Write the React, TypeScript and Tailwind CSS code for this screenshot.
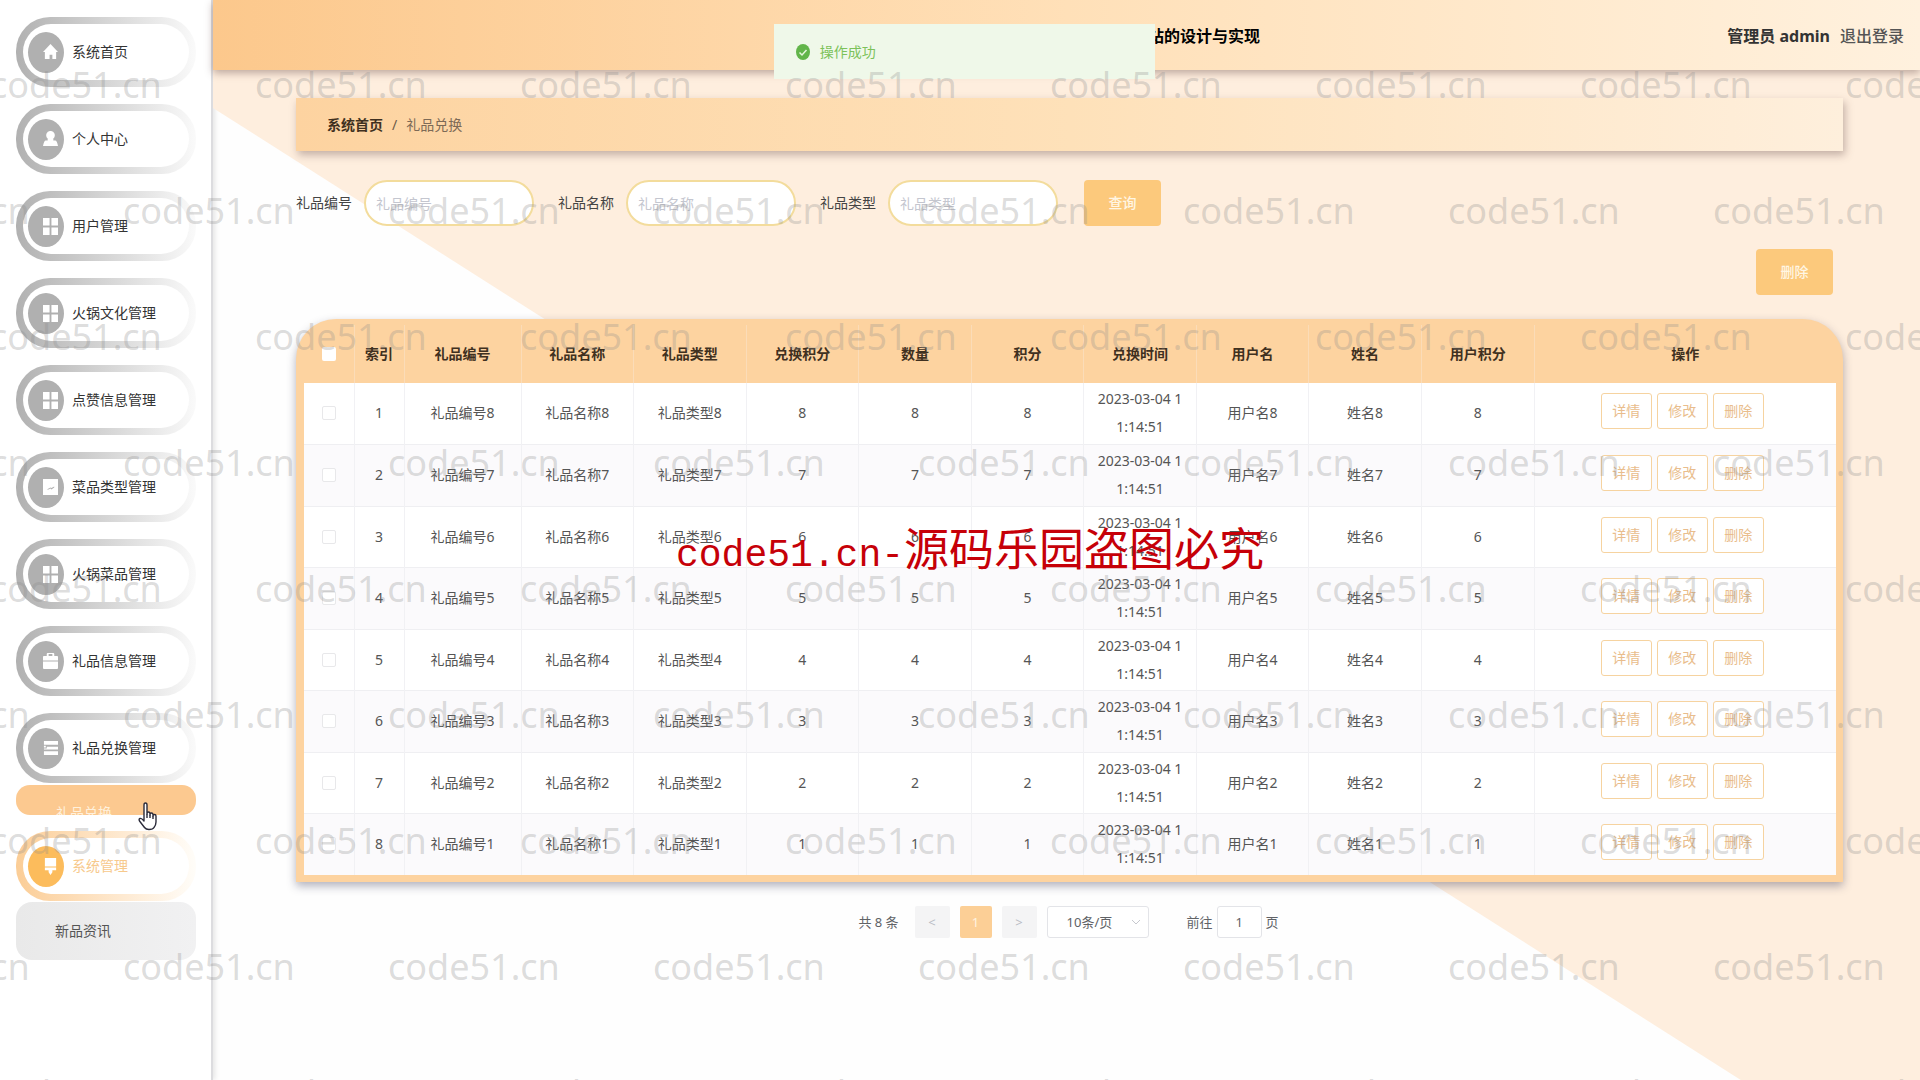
import { ReactNode } from "react";

type IconName = "home" | "user" | "grid" | "image" | "bag" | "list" | "brush";

const icons: Record<IconName, ReactNode> = {
  home: <path d="M8 0 16 8.500h-2V16h-4v-4.500H7V16H2V8.500H0Z" />,
  user: <path d="M8 0a4 4.500 0 0 1 3 8v2h2q2 0 3 6H0q1-6 3-6h2V8A4 4.500 0 0 1 8 0Z" />,
  grid: <path d="M0 0h7v8H0ZM9 0h7v8H9ZM0 10h7v8H0ZM9 10h7v8H9Z" />,
  image: <path fillRule="evenodd" d="M0 0h16v17H0Zm4 11h2l2-1 1 1 3-2V8L9 9.500 8 9Z" />,
  bag: (
    <path
      fillRule="evenodd"
      d="M4 3V1q0-1 1-1h6q1 0 1 1v2h3q1 0 1 1v4H0V4q0-1 1-1ZM6 3h4V1H6ZM0 9h16v7q0 1-1 1H1q-1 0-1-1Z"
    />
  ),
  list: <path d="M1 1h15v4H1Zm0 5h2v2H1Zm3 1h12v3H1V9h3Zm-3 5h15v4H1Z" />,
  brush: <path d="M2 0h12v9H2Zm0 10h12v3h-4v2l-2 3-2-3v-2H2Z" />,
};

const menu: { label: string; icon: IconName }[] = [
  { label: "系统首页", icon: "home" },
  { label: "个人中心", icon: "user" },
  { label: "用户管理", icon: "grid" },
  { label: "火锅文化管理", icon: "grid" },
  { label: "点赞信息管理", icon: "grid" },
  { label: "菜品类型管理", icon: "image" },
  { label: "火锅菜品管理", icon: "grid" },
  { label: "礼品信息管理", icon: "bag" },
  { label: "礼品兑换管理", icon: "list" },
];

const filters = ["礼品编号", "礼品名称", "礼品类型"];

const columns = [
  "礼品名称",
  "礼品类型",
  "兑换积分",
  "数量",
  "积分",
  "兑换时间",
  "用户名",
  "姓名",
  "用户积分",
];

const rows = [8, 7, 6, 5, 4, 3, 2, 1];
const actions = ["详情", "修改", "删除"];

function MenuItem({
  label,
  icon,
  active = false,
}: {
  label: string;
  icon: IconName;
  active?: boolean;
}) {
  return (
    <a
      href="#"
      className={`block rounded-[34px] bg-linear-to-r p-[7px] ${
        active ? "from-[#fbcd96] to-[#fffdf9]" : "from-[#b1b1b1] to-[#fafafa]"
      }`}
    >
      <span className="flex h-14 items-center gap-2 rounded-[28px] bg-white pl-[5px]">
        <span
          className={`flex h-[41px] w-9 items-center justify-end rounded-[50%] pr-1.5 ${
            active ? "bg-[#fcbc5c]" : "bg-[#b0b0b0]"
          }`}
        >
          <svg width="15" height="17" viewBox="0 0 16 18" fill="#fff">
            {icons[icon]}
          </svg>
        </span>
        <span className={active ? "text-[#f7c98c]" : "text-[#333]"}>{label}</span>
      </span>
    </a>
  );
}

function Sidebar() {
  return (
    <nav className="relative w-[213px] shrink-0 border-r-2 border-[#dcdcdf] bg-white pt-[17px] pr-[15px] pl-4 shadow-[2px_0_5px_rgba(0,0,0,0.1)]">
      <div className="flex flex-col gap-[17px]">
        {menu.map((item) => (
          <MenuItem key={item.label} {...item} />
        ))}
      </div>
      <a
        href="#"
        className="mt-0.5 block h-[30px] overflow-hidden rounded-[14px] bg-[#fcc990] pt-4 pl-10 leading-6 text-[#fff1dc]"
      >
        礼品兑换
      </a>
      <div className="mt-4">
        <MenuItem label="系统管理" icon="brush" active />
      </div>
      <a
        href="#"
        className="mt-px block h-[58px] rounded-[16px] bg-linear-to-r from-[#e9e9e9] to-[#f1f1f2] pl-[39px] leading-[58px] text-[#555]"
      >
        新品资讯
      </a>
      <svg
        className="absolute top-[802px] left-[138px]"
        width="20"
        height="30"
        viewBox="0 0 20 30"
        fill="#fff"
        stroke="#2b2b3a"
        strokeWidth="1.400"
        strokeLinejoin="round"
      >
        <path d="M6 18V3q0-2 1.500-2T9 3v9q0-2 1.500-2t1.500 2v1q0-2 1.500-2t1.500 2v1q0-1.500 1.500-1.500T18 14v6q0 3-2 5.500-1 2-5 2-3 0-4.500-2L1.500 19q-1-2 .5-2.500T6 19Z" />
        <path d="M9 12v4M12 13v3M15 14v3" />
      </svg>
    </nav>
  );
}

function Header() {
  return (
    <header className="flex h-[70px] items-center bg-linear-to-r from-[#fcc88c] via-[#ffe0b8] to-[#fff1de] pt-0.5 pr-4 shadow-[0_3px_8px_rgba(90,60,60,0.4)]">
      <h1 className="ml-[55.3%] text-base font-bold text-black">站的设计与实现</h1>
      <div className="ml-auto flex items-center gap-2.5 text-base text-[#333]">
        <span className="font-bold">管理员 admin</span>
        <a href="#" className="font-medium text-[#555]">
          退出登录
        </a>
      </div>
    </header>
  );
}

function GiftTable() {
  return (
    <div className="mt-6 rounded-t-[40px] bg-[#fdd3a0] pt-1.5 pr-[7px] pb-[7px] pl-2 shadow-[0_4px_10px_rgba(60,60,90,0.4)]">
      <table className="w-full table-fixed border-collapse text-center leading-[28px] text-[#555]">
        <thead>
          <tr className="h-[58px] text-[#3f3020]">
            <th className="w-[50px] border-r border-[#fbdcb8]">
              <input
                type="checkbox"
                aria-label="全选"
                className="mx-auto block size-3.5 appearance-none rounded-xs bg-white"
              />
            </th>
            <th className="w-[50px] border-r border-[#fbdcb8]">索引</th>
            <th className="w-[117px] border-r border-[#fbdcb8]">礼品编号</th>
            {columns.map((name) => (
              <th key={name} className="border-r border-[#fbdcb8]">
                {name}
              </th>
            ))}
            <th className="w-[302px]">操作</th>
          </tr>
        </thead>
        <tbody>
          {rows.map((n, i) => (
            <tr
              key={n}
              className="h-[61px] border-b border-[#efeff2] bg-white last:border-b-0 even:h-[62px] even:bg-[#fbfafc] [&>td]:border-r [&>td]:border-[#f1f1f4] [&>td]:p-0 [&>td:last-child]:border-r-0"
            >
              <td>
                <input
                  type="checkbox"
                  aria-label={`选择第${i + 1}行`}
                  className="mx-auto block size-3.5 appearance-none rounded-xs border border-[#e8e8ea] bg-white"
                />
              </td>
              <td>{i + 1}</td>
              <td>礼品编号{n}</td>
              <td>礼品名称{n}</td>
              <td>礼品类型{n}</td>
              <td>{n}</td>
              <td>{n}</td>
              <td>{n}</td>
              <td>
                2023-03-04 1<br />
                1:14:51
              </td>
              <td>用户名{n}</td>
              <td>姓名{n}</td>
              <td>{n}</td>
              <td>
                <div className="flex justify-center gap-[5px] pr-1.5 pb-1">
                  {actions.map((label) => (
                    <button
                      key={label}
                      className="h-9 w-[51px] rounded-[3px] border border-[#f6d3a0] bg-white text-[#e9bd8c]"
                    >
                      {label}
                    </button>
                  ))}
                </div>
              </td>
            </tr>
          ))}
        </tbody>
      </table>
    </div>
  );
}

function Pagination() {
  return (
    <div className="mt-6 flex h-8 items-center justify-center pr-0.5 text-[13px] text-[#606266]">
      <span>共 8 条</span>
      <button className="ml-4 h-8 w-[35px] rounded-xs bg-[#f4f4f5] text-[#b9bcc4]">&lt;</button>
      <button className="ml-2.5 h-8 w-8 rounded-xs bg-[#fccf96] text-[#fff4e0]">1</button>
      <button className="ml-2.5 h-8 w-[35px] rounded-xs bg-[#f4f4f5] text-[#b9bcc4]">&gt;</button>
      <div className="relative ml-2.5">
        <select
          aria-label="每页条数"
          className="h-8 w-[102px] appearance-none rounded-[3px] border border-[#e3e4e8] bg-white pl-[19px]"
        >
          <option>10条/页</option>
        </select>
        <svg
          className="pointer-events-none absolute top-3 right-2"
          width="10"
          height="9"
          viewBox="0 0 10 9"
          fill="none"
          stroke="#c6c8ce"
        >
          <path d="M1 2l4 4 4-4" />
        </svg>
      </div>
      <label className="ml-[38px] flex items-center gap-1">
        前往
        <input
          defaultValue="1"
          className="h-8 w-[45px] rounded-[3px] border border-[#e3e4e8] bg-white text-center"
        />
        页
      </label>
    </div>
  );
}

function Watermark() {
  return (
    <div
      aria-hidden="true"
      className="pointer-events-none absolute inset-0 overflow-hidden text-[36px] leading-[126px] text-[#8c8c8c]/30"
    >
      <div className="mt-[22px]">
        {Array.from({ length: 9 }, (_, row) => (
          <div key={row} className={`flex h-[126px] ${row % 2 ? "-ml-[142px]" : "-ml-[10px]"}`}>
            {Array.from({ length: 9 }, (_, col) => (
              <span key={col} className="w-[265px] shrink-0">
                code51.cn
              </span>
            ))}
          </div>
        ))}
      </div>
    </div>
  );
}

export default function App() {
  return (
    <div className="relative flex min-h-screen overflow-hidden bg-[#fefefe] font-['Noto_Sans','Noto_Sans_CJK_SC',sans-serif] text-sm">
      <Sidebar />
      <div className="relative min-w-0 flex-1">
        <div className="absolute inset-0 bg-[#feeede] [clip-path:polygon(0_0,100%_0,100%_100%,89.5%_100%,0_10%)]" />
        <div className="relative">
          <Header />
          <main className="pt-7 pr-[77px] pl-[83px]">
            <div className="flex h-[53px] items-center gap-[9px] bg-linear-to-r from-[#fdd3a0] via-[#fee1b9] to-[#feefdc] px-[31px] shadow-[2px_4px_8px_rgba(90,60,60,0.35)]">
              <a href="#" className="font-bold text-[#3f3020]">
                系统首页
              </a>
              <span className="text-[#6b5a48]">/</span>
              <span className="text-[#7d6a56]">礼品兑换</span>
            </div>

            <form className="mt-[29px] flex items-center gap-6">
              {filters.map((name) => (
                <label key={name} className="flex items-center gap-3 text-[#444]">
                  {name}
                  <input
                    placeholder={name}
                    className="h-[46px] w-[170px] rounded-full border-2 border-[#f3dc9c] bg-white px-2.5 placeholder:text-[#c4c6cf]"
                  />
                </label>
              ))}
              <button
                type="button"
                className="ml-0.5 h-[46px] w-[77px] rounded-[4px] bg-[#fcc97c] font-medium text-[#fff6e4]"
              >
                查询
              </button>
            </form>

            <div className="mt-[23px] flex justify-end pr-2.5">
              <button className="h-[46px] w-[77px] rounded-[4px] bg-[#fcc97c] font-medium text-[#fff6e4]">
                删除
              </button>
            </div>

            <GiftTable />
            <Pagination />
          </main>
        </div>
      </div>

      <div
        role="alert"
        className="absolute top-6 left-[40.3%] flex h-[55px] w-[381px] items-center gap-2.5 bg-[#eff8e9] pl-[22px] text-[#7cc25a]"
      >
        <svg width="14" height="16" viewBox="0 0 14 16">
          <ellipse cx="7" cy="8" rx="7" ry="8" fill="#62b54a" />
          <path d="M3.500 8.500 6 11l4.500-5" fill="none" stroke="#e6f7dc" strokeWidth="1.500" />
        </svg>
        操作成功
      </div>

      <Watermark />
      <div className="pointer-events-none absolute inset-x-0 top-[519px] flex items-baseline justify-center pl-5 text-[45px] leading-[60px] text-[#c60008]">
        <span className="font-['Liberation_Mono',monospace] text-[38px]">code51.cn-</span>
        <span>源码乐园盗图必究</span>
      </div>
    </div>
  );
}
